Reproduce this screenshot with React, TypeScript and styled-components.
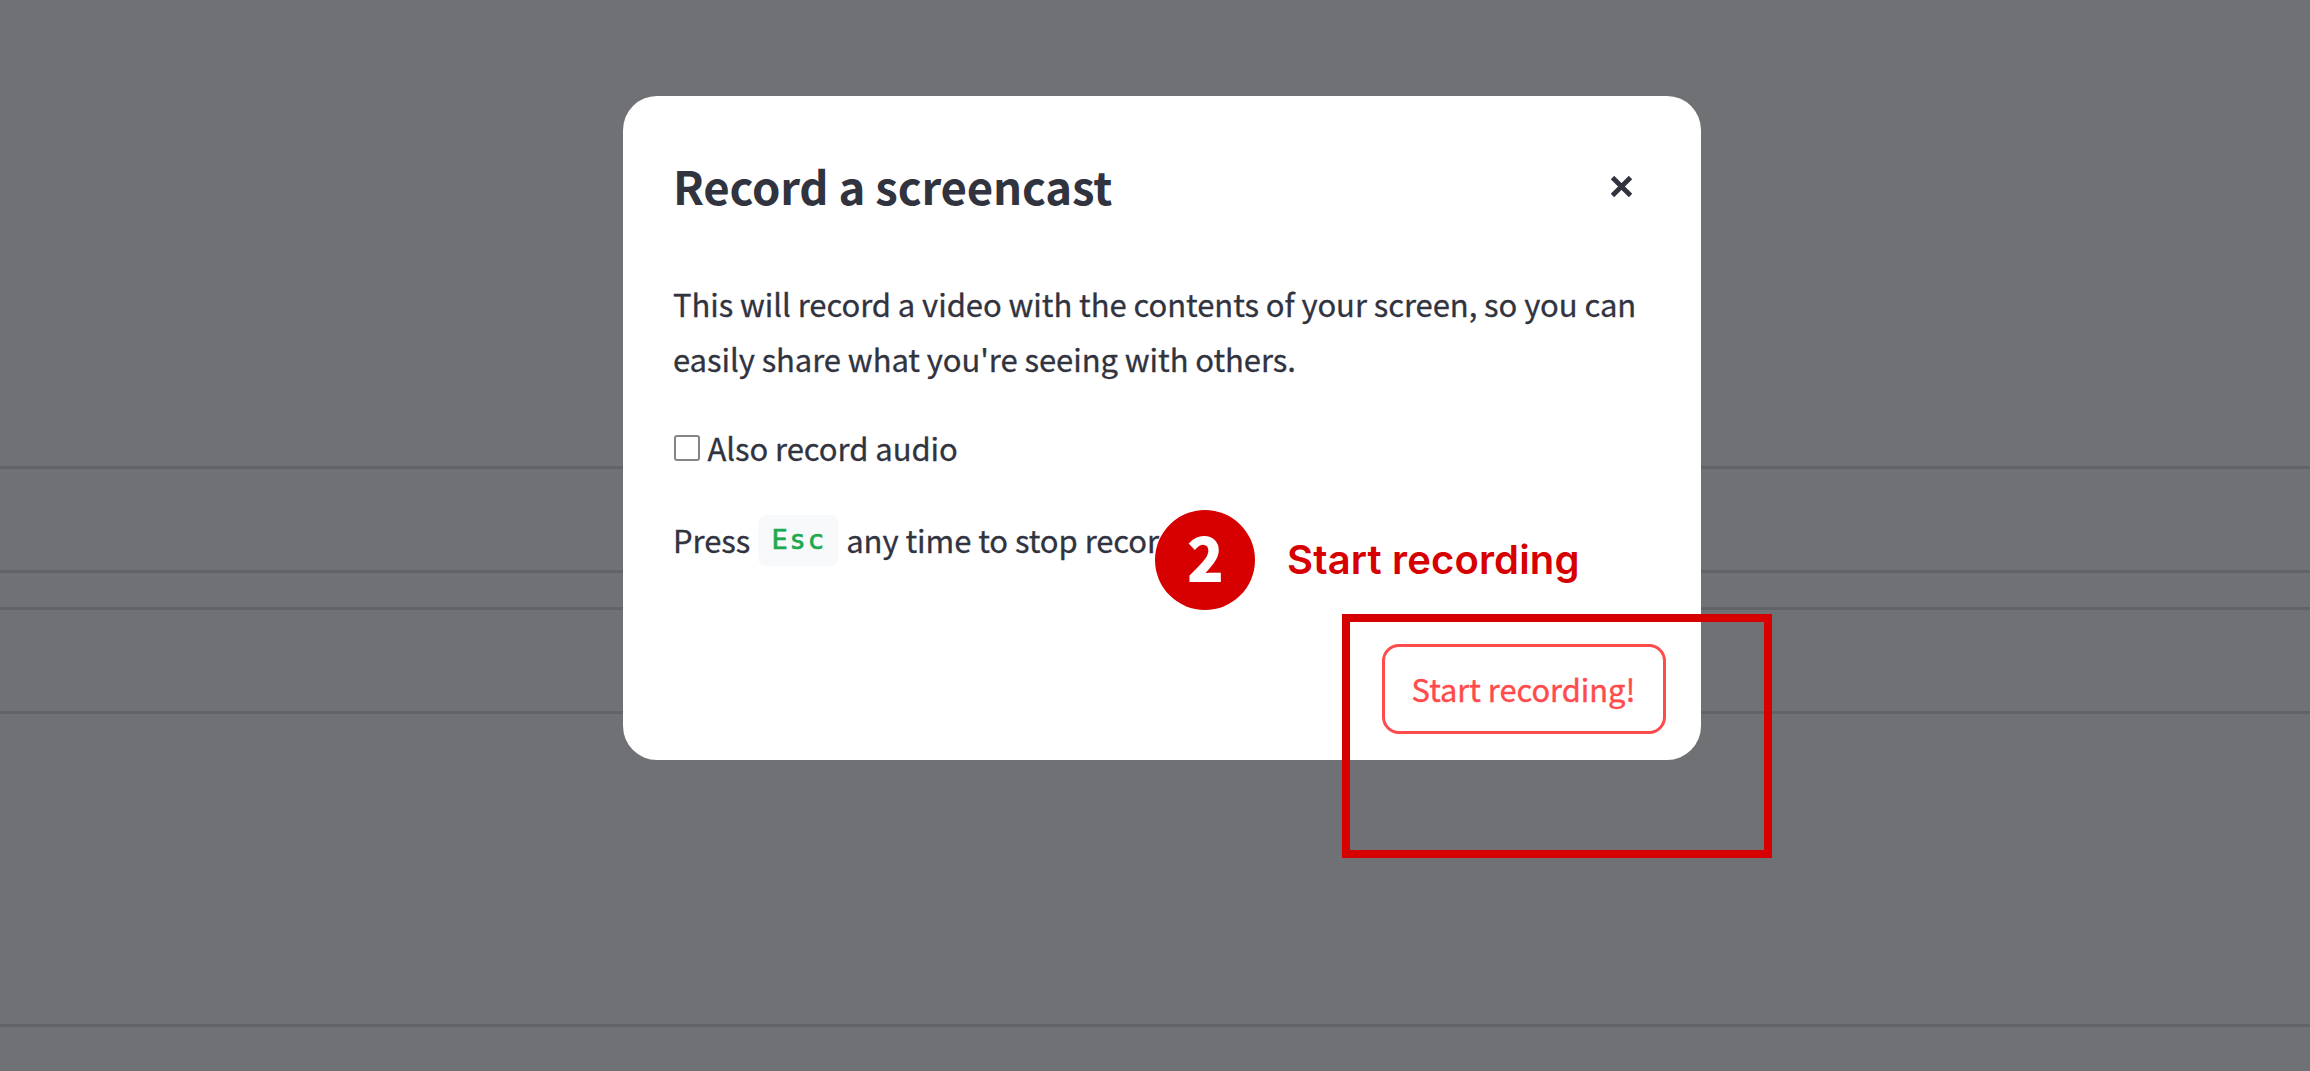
import React from "react";
import styled, { createGlobalStyle } from "styled-components";

const GlobalStyle = createGlobalStyle`
  html, body { margin: 0; padding: 0; }
  body { background: #707175; overflow: hidden; }
  * { box-sizing: border-box; }
`;

const sans = `"Noto Sans CJK SC", "Noto Sans", sans-serif`;

const Page = styled.main`
  position: relative;
  width: 2310px;
  height: 1071px;
  overflow: hidden;
  background: #707175;
  color: #31333f;
  font-family: ${sans};
`;

const Backdrop = styled.div`
  display: flex;
  flex-direction: column;
  padding-top: 466px;
`;

const Rule = styled.hr<{ $gap: number }>`
  width: 100%;
  height: 3px;
  margin: 0 0 ${(p) => p.$gap}px;
  border: 0;
  background: #626367;
`;

const Overlay = styled.div`
  position: absolute;
  inset: 0;
  display: flex;
  align-items: flex-start;
  padding: 95.5px 0 0 622.5px;
`;

const Dialog = styled.section`
  display: flex;
  flex-direction: column;
  width: 1078px;
  height: 664px;
  padding: 54px 35px 26px 50.5px;
  border-radius: 34px;
  background: #fff;
`;

const Header = styled.header`
  display: flex;
  align-items: center;
  justify-content: space-between;
  height: 72px;
  padding-right: 33.5px;
`;

const Title = styled.h1`
  margin: 0;
  padding-bottom: 2px;
  font-size: 45.5px;
  line-height: 70px;
  font-weight: 700;
  letter-spacing: -0.2px;
`;

const CloseButton = styled.button`
  display: flex;
  padding: 1px 0 0;
  border: 0;
  background: none;
  color: #31333f;
`;

const Body = styled.div`
  display: flex;
  flex-direction: column;
  padding-top: 54px;
  font-size: 31px;
  line-height: 55px;
  white-space: nowrap;
  -webkit-text-stroke: 0.3px currentColor;
`;

const Text = styled.p`
  margin: 0;
  letter-spacing: -0.06px;
`;

const CheckLabel = styled.label`
  display: flex;
  align-items: center;
  gap: 8px;
  margin-top: 34px;
`;

const Checkbox = styled.input`
  appearance: none;
  width: 26px;
  height: 26px;
  margin: 1px 0 0 0.5px;
  border: 2px solid #858585;
  border-radius: 3px;
  background: #fff;
`;

const Hint = styled.div`
  display: flex;
  align-items: center;
  margin-top: 37px;
`;

const Key = styled.kbd`
  width: 80px;
  height: 51px;
  margin: 3px 8.5px 0 7.5px;
  border-radius: 8px;
  background: #f8f9fb;
  color: #21a94f;
  font-family: "DejaVu Sans Mono", monospace;
  font-size: 27px;
  line-height: 49px;
  letter-spacing: 1.8px;
  text-indent: 1.8px;
  text-align: center;
  -webkit-text-stroke: 0.7px currentColor;
`;

const Footer = styled.footer`
  display: flex;
  justify-content: flex-end;
  margin-top: auto;
`;

const PrimaryButton = styled.button`
  width: 284px;
  height: 90px;
  padding: 1px 0 0;
  border: 3px solid #ff4b4b;
  border-radius: 17px;
  background: #fff;
  color: #ff4b4b;
  font-family: ${sans};
  font-size: 30.8px;
  line-height: 48px;
  white-space: nowrap;
  -webkit-text-stroke: 0.4px currentColor;
`;

const Callout = styled.div`
  position: absolute;
  left: 1155px;
  top: 510px;
  display: flex;
  align-items: center;
  gap: 32px;
  color: #d60000;
`;

const StepNumber = styled.span`
  display: flex;
  align-items: center;
  justify-content: center;
  width: 100px;
  height: 100px;
  padding: 0 0 8px 1px;
  border-radius: 50%;
  background: #d60000;
  color: #fff;
  font-size: 59px;
  line-height: 92px;
  font-weight: 700;
  -webkit-text-stroke: 2px currentColor;
`;

const CalloutText = styled.span`
  font-family: Inter, sans-serif;
  font-size: 40px;
  line-height: 48px;
  font-weight: 600;
  letter-spacing: 0.15px;
  white-space: nowrap;
`;

const Highlight = styled.div`
  position: absolute;
  left: 1342px;
  top: 614px;
  width: 430px;
  height: 244px;
  border: 8px solid #d60000;
`;

const ruleGaps = [101, 34, 101, 310, 0];

export default function App() {
  return (
    <Page>
      <GlobalStyle />
      <Backdrop>
        {ruleGaps.map((gap, i) => (
          <Rule key={i} $gap={gap} />
        ))}
      </Backdrop>
      <Overlay>
        <Dialog role="dialog" aria-labelledby="dialog-title">
          <Header>
            <Title id="dialog-title">Record a screencast</Title>
            <CloseButton aria-label="Close">
              <svg width="21" height="21" viewBox="0 0 21 21" fill="none" stroke="currentColor" strokeWidth="4.8">
                <path d="M1.5 1.5 19.5 19.5M19.5 1.5 1.5 19.5" />
              </svg>
            </CloseButton>
          </Header>
          <Body>
            <Text>This will record a video with the contents of your screen, so you can</Text>
            <Text>easily share what you're seeing with others.</Text>
            <CheckLabel>
              <Checkbox type="checkbox" />
              <Text as="span">Also record audio</Text>
            </CheckLabel>
            <Hint>
              <Text as="span">Press</Text>
              <Key>Esc</Key>
              <Text as="span">any time to stop recor</Text>
            </Hint>
          </Body>
          <Footer>
            <PrimaryButton>Start recording!</PrimaryButton>
          </Footer>
        </Dialog>
      </Overlay>
      <Callout>
        <StepNumber>2</StepNumber>
        <CalloutText>Start recording</CalloutText>
      </Callout>
      <Highlight />
    </Page>
  );
}
